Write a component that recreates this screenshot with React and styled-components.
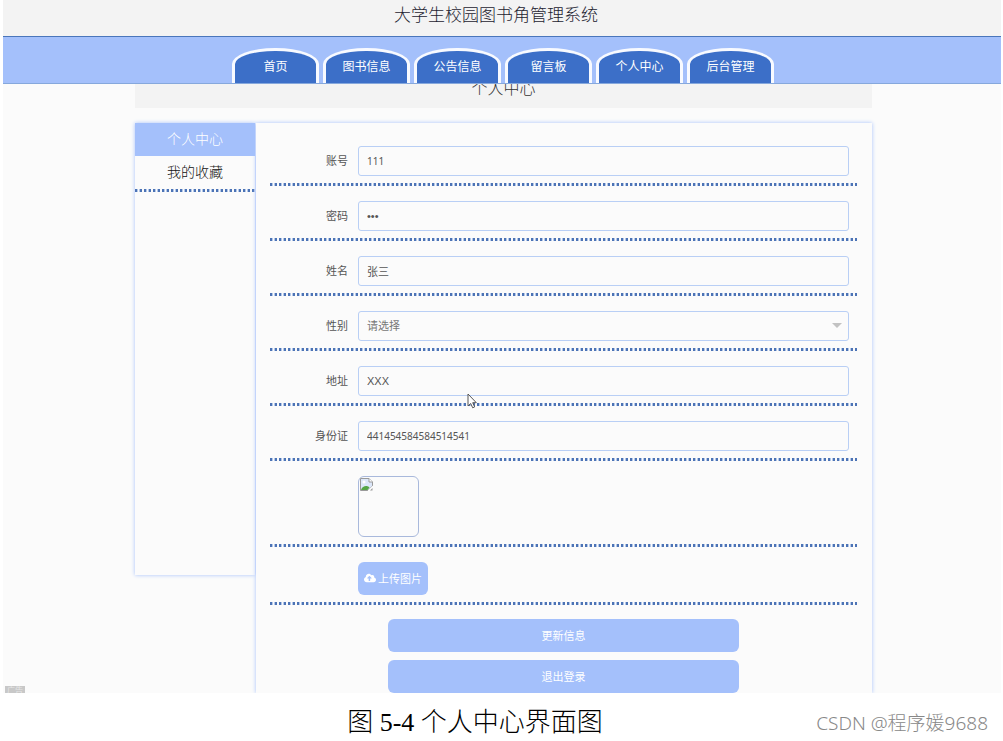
import React from "react";
import styled, { createGlobalStyle, css } from "styled-components";
import { FaCloudUploadAlt } from "react-icons/fa";

const colors = {
  light: "#a4c0fb",
  primary: "#3c6fc8",
  line: "#4a76bb",
  dot: "#4c73b5",
  page: "#fbfbfb",
  band: "#f3f3f3",
  text: "#333",
};

const sans = '"Liberation Sans", "Noto Sans CJK SC", sans-serif';

const GlobalStyle = createGlobalStyle`
  *, *::before, *::after { box-sizing: border-box; }
  body { margin: 0; background: #fff; font-family: ${sans}; color: ${colors.text}; }
  button, input, select { font: inherit; }
`;

const dottedLine = css`
  &::after {
    content: "";
    display: block;
    height: 3px;
    background: repeating-linear-gradient(
      90deg,
      ${colors.dot} 0 2px,
      #b4c8e8 2px 3px,
      transparent 3px 4px,
      #b4c8e8 4px 5px,
      ${colors.dot} 5px 7px,
      transparent 7px 9px
    );
  }
`;

const Frame = styled.div`
  position: relative;
  overflow: hidden;
  margin: 0 2px 0 3px;
  background: ${colors.page};
`;

const Header = styled.header`
  position: relative;
  z-index: 1;
`;

const SiteTitle = styled.h1`
  margin: 0;
  padding: 0 12px 4px 0;
  background: ${colors.band};
  color: #1c2230;
  font-size: 17px;
  font-weight: 300;
  line-height: 32px;
  text-align: center;
`;

const Nav = styled.nav`
  display: flex;
  justify-content: center;
  align-items: flex-end;
  gap: 4px;
  height: 48px;
  padding-left: 2px;
  background: ${colors.light};
  border-top: 1px solid ${colors.line};
  border-bottom: 1px solid #86a8dc;
`;

const Tab = styled.a`
  width: 87px;
  height: 35px;
  border: 3px solid #f8faff;
  border-bottom: 0;
  border-radius: 43px 43px 0 0 / 16px 16px 0 0;
  background: ${colors.primary};
  color: #fff;
  font-size: 12px;
  line-height: 32px;
  text-align: center;
  text-decoration: none;
`;

const Main = styled.main`
  padding: 0 129px 0 132px;
`;

const PageTitle = styled.h2`
  margin: -14px 0 15px;
  background: ${colors.band};
  font-size: 16px;
  font-weight: 300;
  line-height: 38px;
  text-align: center;
`;

const Columns = styled.div`
  display: flex;
  align-items: flex-start;
  gap: 1px;
`;

const cardShadow = css`
  background: ${colors.page};
  box-shadow: 0 0 4px ${colors.light};
`;

const Sidebar = styled.aside`
  flex: 0 0 120px;
  min-height: 452px;
  ${cardShadow}
`;

const SideItem = styled.div`
  ${(p) => !p.$active && dottedLine}
`;

const SideLink = styled.a`
  display: block;
  background: ${(p) => (p.$active ? colors.light : "transparent")};
  color: ${(p) => (p.$active ? "#fff" : "#111")};
  font-size: 14px;
  font-weight: 300;
  line-height: 33px;
  text-align: center;
  text-decoration: none;
`;

const Form = styled.form`
  flex: 1;
  padding: 8px 15px 0 14px;
  font-size: 11px;
  ${cardShadow}
`;

const Row = styled.div`
  position: relative;
  padding-top: 15px;
  ${dottedLine}
`;

const RowBody = styled.div`
  display: flex;
  align-items: center;
  gap: 10px;
  padding: 0 8px 7px 0;
`;

const Label = styled.label`
  flex: 0 0 78px;
  padding-bottom: 2px;
  color: #555;
  text-align: right;
`;

const control = css`
  width: 100%;
  height: 30px;
  padding: 0 8px;
  border: 1px solid #b9cff5;
  border-radius: 3px;
  background: ${colors.page};
  color: #555;
  outline: 0;
`;

const Input = styled.input`
  ${control}
  ${(p) => p.$numeric && 'font-family: "Noto Sans", sans-serif; font-size: 10px;'}
`;

const SelectWrap = styled.div`
  position: relative;
  flex: 1;
`;

const Select = styled.select`
  ${control}
  display: block;
  appearance: none;
  color: #777;
`;

const Caret = styled.svg`
  position: absolute;
  top: 12px;
  right: 7px;
  pointer-events: none;
`;

const Photo = styled.div`
  width: 61px;
  height: 61px;
  padding: 1px;
  border: 1px solid #a9b9dc;
  border-radius: 6px;
`;

const Button = styled.button`
  display: flex;
  align-items: center;
  justify-content: center;
  gap: 2px;
  width: ${(p) => (p.$small ? "70px" : "100%")};
  height: 33px;
  padding: 0 0 2px;
  border: 0;
  border-radius: 6px;
  background: ${colors.light};
  color: #fff;
`;

const Actions = styled.div`
  display: grid;
  gap: 8px;
  padding: 14px 118px 0;
`;

const Pointer = styled.svg`
  position: absolute;
  left: 197px;
  top: 42px;
`;

const AdBadge = styled.span`
  position: absolute;
  left: 2px;
  bottom: 0;
  width: 20px;
  height: 7px;
  overflow: hidden;
  background: #c8c8c8;
  color: #e6e6e6;
  font-size: 8px;
  line-height: 10px;
  text-align: center;
`;

const Footer = styled.footer`
  display: grid;
  grid-template-columns: 1fr auto 1fr;
  align-items: center;
  padding: 12px 15px 0 0;
`;

const Caption = styled.p`
  grid-column: 2;
  margin: 0 38px 0 0;
  color: #000;
  font-family: "Liberation Serif", "Noto Sans CJK SC", serif;
  font-size: 26px;
  font-weight: 300;
  line-height: 36px;
`;

const Watermark = styled.span`
  justify-self: end;
  color: #888;
  font-family: "Noto Sans", "Noto Sans CJK SC", sans-serif;
  font-size: 19px;
  font-weight: 300;
  line-height: 36px;
  white-space: nowrap;
`;

const tabs = ["首页", "图书信息", "公告信息", "留言板", "个人中心", "后台管理"];

function Field({ id, label, children, after }) {
  return (
    <Row>
      <RowBody>
        <Label htmlFor={id}>{label}</Label>
        {children}
      </RowBody>
      {after}
    </Row>
  );
}

function BrokenImage() {
  return (
    <svg width="13" height="13" viewBox="0 0 13 13" role="img" aria-label="头像">
      <path d="M.5 12.500V.5H9l3.500 3.500v4L8 12.500z" fill="#dce7fa" stroke="#9a9a9a" />
      <path d="M9 .5V4h3.500" fill="#fff" stroke="#9a9a9a" />
      <path d="M1 12c1-3 3-4 5-4 1.500 0 2.500.500 3.500 1.500L7.500 12z" fill="#55a646" />
      <circle cx="4" cy="4" r="1.500" fill="#fff" />
      <path d="M13 7.500 7.500 13H9l4-4z" fill="#fff" />
      <path d="M10 12.500h2.500V10z" fill="#9a9a9a" />
    </svg>
  );
}

function MousePointer() {
  return (
    <Pointer width="11" height="16" viewBox="0 0 11 16" aria-hidden="true">
      <path
        d="M1 1v12l2.700-2.500 2 4.300 2-.9-2-4.200h3.600z"
        fill="#fff"
        stroke="#555"
        strokeWidth="1"
      />
    </Pointer>
  );
}

export default function App() {
  return (
    <>
      <GlobalStyle />
      <Frame>
        <Header>
          <SiteTitle>大学生校园图书角管理系统</SiteTitle>
          <Nav>
            {tabs.map((tab) => (
              <Tab key={tab} href="#">
                {tab}
              </Tab>
            ))}
          </Nav>
        </Header>
        <Main>
          <PageTitle>个人中心</PageTitle>
          <Columns>
            <Sidebar>
              <SideItem $active>
                <SideLink href="#" $active>
                  个人中心
                </SideLink>
              </SideItem>
              <SideItem>
                <SideLink href="#">我的收藏</SideLink>
              </SideItem>
            </Sidebar>
            <Form onSubmit={(e) => e.preventDefault()}>
              <Field id="account" label="账号">
                <Input id="account" defaultValue="111" $numeric />
              </Field>
              <Field id="password" label="密码">
                <Input id="password" type="password" defaultValue="111" />
              </Field>
              <Field id="name" label="姓名">
                <Input id="name" defaultValue="张三" />
              </Field>
              <Field id="gender" label="性别">
                <SelectWrap>
                  <Select id="gender" defaultValue="">
                    <option value="">请选择</option>
                    <option value="male">男</option>
                    <option value="female">女</option>
                  </Select>
                  <Caret width="10" height="5" viewBox="0 0 10 5" aria-hidden="true">
                    <path d="M0 0h10L5 5z" fill="#c2c2c2" />
                  </Caret>
                </SelectWrap>
              </Field>
              <Field id="address" label="地址" after={<MousePointer />}>
                <Input id="address" defaultValue="XXX" />
              </Field>
              <Field id="idcard" label="身份证">
                <Input id="idcard" defaultValue="441454584584514541" $numeric />
              </Field>
              <Field>
                <Photo>
                  <BrokenImage />
                </Photo>
              </Field>
              <Field>
                <Button type="button" $small>
                  <FaCloudUploadAlt size={12} />
                  上传图片
                </Button>
              </Field>
              <Actions>
                <Button type="submit">更新信息</Button>
                <Button type="button">退出登录</Button>
              </Actions>
            </Form>
          </Columns>
        </Main>
        <AdBadge>广告</AdBadge>
      </Frame>
      <Footer>
        <Caption>图 5-4 个人中心界面图</Caption>
        <Watermark>CSDN @程序媛9688</Watermark>
      </Footer>
    </>
  );
}
